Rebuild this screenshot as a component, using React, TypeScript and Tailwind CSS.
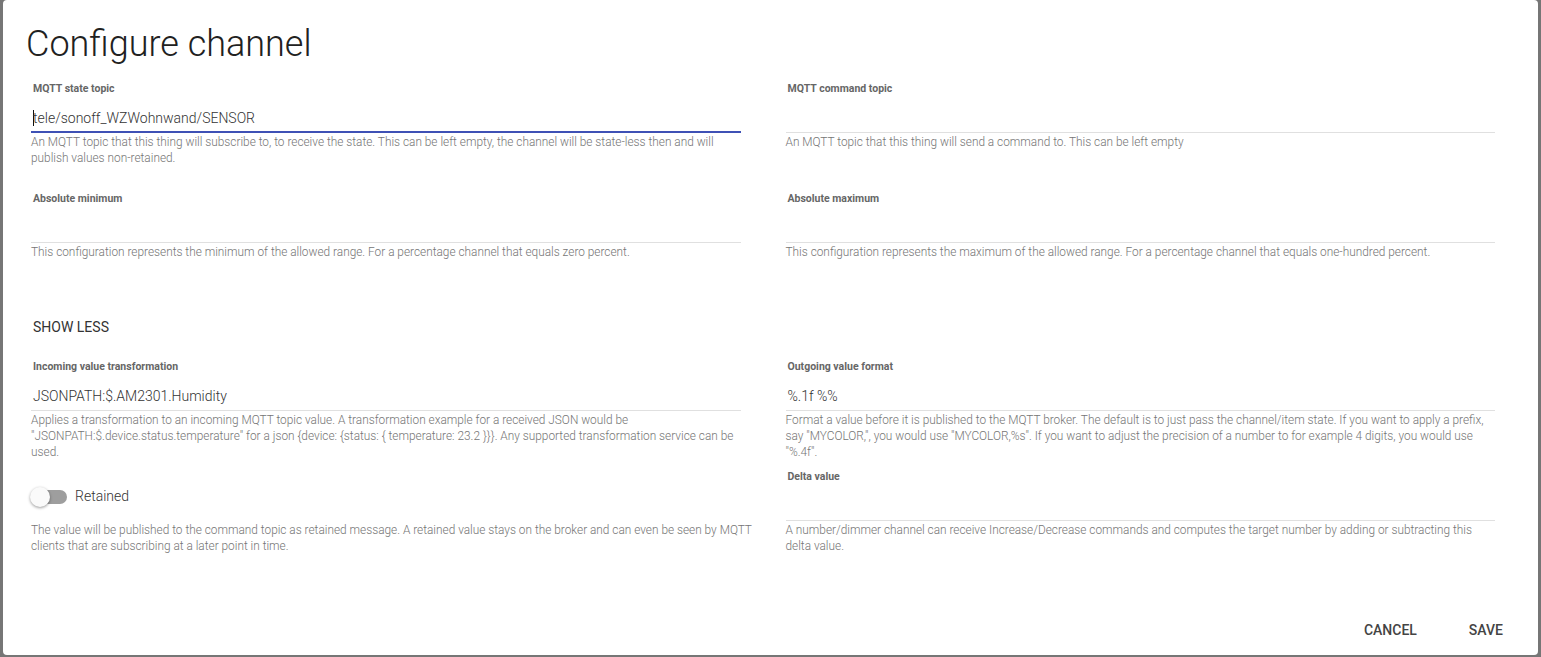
import React from "react"

type FieldProps = {
  label: string
  value?: string
  help: string
  focused?: boolean
}

function Field({ label, value, help, focused }: FieldProps) {
  return (
    <div className="h-[110px]">
      <div className="h-4 pl-[2px] text-[10.5px] font-bold leading-4 text-[#666]">{label}</div>
      <div className="flex h-[35px] items-end pb-1 pl-[2px] text-[14px] font-light leading-5 text-[#333]">
        {focused && <span className="mb-[2px] inline-block h-4 w-px bg-[#111]" />}
        {value && <span className={focused ? "-ml-px" : ""}>{value}</span>}
      </div>
      {focused ? (
        <div className="-mt-px h-[2px] bg-[#3f51b5]" />
      ) : (
        <div className="h-px bg-[#e0e0e0]" />
      )}
      <p className="mt-px text-[11.85px] font-light leading-4 text-[#757575]">{help}</p>
    </div>
  )
}

function Toggle({ label, help }: { label: string; help: string }) {
  return (
    <div className="h-[110px]">
      <div className="flex h-[53px] items-center pt-[2px]">
        <div className="relative -ml-px h-5 w-[37px]">
          <div className="absolute left-[3px] top-[3px] h-[14px] w-[34px] rounded-full bg-[#9e9e9e]" />
          <div className="absolute left-0 top-0 h-5 w-5 rounded-full bg-[#fafafa] shadow-[0_1px_3px_rgba(0,0,0,0.4)]" />
        </div>
        <span className="ml-[8px] text-[14px] font-light text-[#333]">{label}</span>
      </div>
      <p className="-mr-[20px] text-[11.85px] font-light leading-4 text-[#757575]">{help}</p>
    </div>
  )
}

export default function App() {
  return (
    <div className="h-[657px] w-full overflow-hidden bg-[#767676] px-[3px] font-['Roboto',sans-serif]">
      <div className="flex h-[655px] flex-col rounded-[4px] bg-white">
        <div className="h-[81px] pl-[23px] pt-[24px]">
          <h1 className="text-[36px] font-light leading-[40px] text-[#212121]">Configure channel</h1>
        </div>

        <div className="grid grid-cols-2 gap-x-[45px] pl-[28px] pr-[43px]">
          <Field
            label="MQTT state topic"
            value="tele/sonoff_WZWohnwand/SENSOR"
            focused
            help="An MQTT topic that this thing will subscribe to, to receive the state. This can be left empty, the channel will be state-less then and will publish values non-retained."
          />
          <Field
            label="MQTT command topic"
            help="An MQTT topic that this thing will send a command to. This can be left empty"
          />
          <Field
            label="Absolute minimum"
            help="This configuration represents the minimum of the allowed range. For a percentage channel that equals zero percent."
          />
          <Field
            label="Absolute maximum"
            help="This configuration represents the maximum of the allowed range. For a percentage channel that equals one-hundred percent."
          />

          <div className="col-span-2 h-[58px] pl-[2px] pt-[14px]">
            <button className="text-[14px] font-normal leading-4 text-[#333]">SHOW LESS</button>
          </div>

          <Field
            label="Incoming value transformation"
            value="JSONPATH:$.AM2301.Humidity"
            help={'Applies a transformation to an incoming MQTT topic value. A transformation example for a received JSON would be "JSONPATH:$.device.status.temperature" for a json {device: {status: { temperature: 23.2 }}}. Any supported transformation service can be used.'}
          />
          <Field
            label="Outgoing value format"
            value="%.1f %%"
            help={'Format a value before it is published to the MQTT broker. The default is to just pass the channel/item state. If you want to apply a prefix, say "MYCOLOR,", you would use "MYCOLOR,%s". If you want to adjust the precision of a number to for example 4 digits, you would use "%.4f".'}
          />
          <Toggle
            label="Retained"
            help="The value will be published to the command topic as retained message. A retained value stays on the broker and can even be seen by MQTT clients that are subscribing at a later point in time."
          />
          <Field
            label="Delta value"
            help="A number/dimmer channel can receive Increase/Decrease commands and computes the target number by adding or subtracting this delta value."
          />
        </div>

        <div className="flex justify-end gap-5 pr-[19px] pt-[33px]">
          <button className="h-9 px-4 text-[14px] font-medium text-[#444]">CANCEL</button>
          <button className="h-9 px-4 text-[14px] font-medium text-[#444]">SAVE</button>
        </div>
      </div>
    </div>
  )
}
